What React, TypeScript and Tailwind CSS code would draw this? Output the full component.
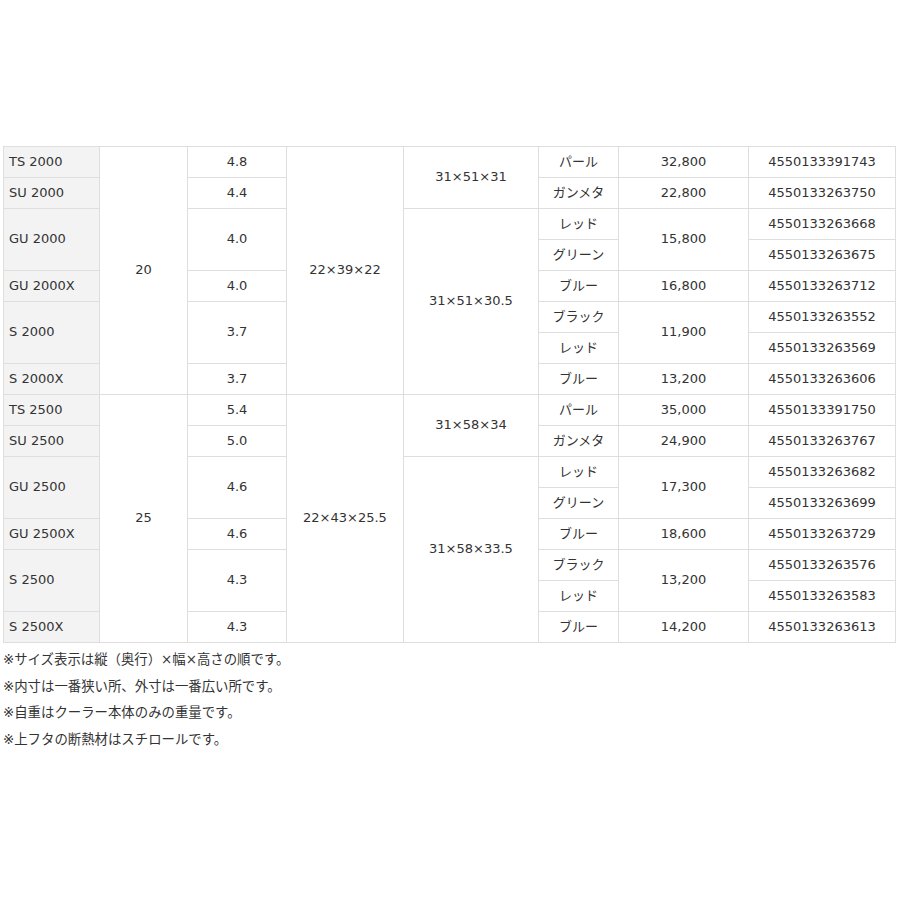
import React from 'react';

type Cell = { text: string; rows?: number; head?: boolean };

const series = (
  size: string,
  cap: string,
  inner: string,
  outerTop: string,
  outerBottom: string,
  w: string[],
  prices: string[],
  jan: string[],
): Cell[][] => [
  [
    { text: `TS ${size}`, head: true },
    { text: cap, rows: 8 },
    { text: w[0] },
    { text: inner, rows: 8 },
    { text: outerTop, rows: 2 },
    { text: 'パール' },
    { text: prices[0] },
    { text: jan[0] },
  ],
  [{ text: `SU ${size}`, head: true }, { text: w[1] }, { text: 'ガンメタ' }, { text: prices[1] }, { text: jan[1] }],
  [
    { text: `GU ${size}`, head: true, rows: 2 },
    { text: w[2], rows: 2 },
    { text: outerBottom, rows: 6 },
    { text: 'レッド' },
    { text: prices[2], rows: 2 },
    { text: jan[2] },
  ],
  [{ text: 'グリーン' }, { text: jan[3] }],
  [{ text: `GU ${size}X`, head: true }, { text: w[3] }, { text: 'ブルー' }, { text: prices[3] }, { text: jan[4] }],
  [
    { text: `S ${size}`, head: true, rows: 2 },
    { text: w[4], rows: 2 },
    { text: 'ブラック' },
    { text: prices[4], rows: 2 },
    { text: jan[5] },
  ],
  [{ text: 'レッド' }, { text: jan[6] }],
  [{ text: `S ${size}X`, head: true }, { text: w[5] }, { text: 'ブルー' }, { text: prices[5] }, { text: jan[7] }],
];

const rows: Cell[][] = [
  ...series(
    '2000',
    '20',
    '22×39×22',
    '31×51×31',
    '31×51×30.5',
    ['4.8', '4.4', '4.0', '4.0', '3.7', '3.7'],
    ['32,800', '22,800', '15,800', '16,800', '11,900', '13,200'],
    [
      '4550133391743',
      '4550133263750',
      '4550133263668',
      '4550133263675',
      '4550133263712',
      '4550133263552',
      '4550133263569',
      '4550133263606',
    ],
  ),
  ...series(
    '2500',
    '25',
    '22×43×25.5',
    '31×58×34',
    '31×58×33.5',
    ['5.4', '5.0', '4.6', '4.6', '4.3', '4.3'],
    ['35,000', '24,900', '17,300', '18,600', '13,200', '14,200'],
    [
      '4550133391750',
      '4550133263767',
      '4550133263682',
      '4550133263699',
      '4550133263729',
      '4550133263576',
      '4550133263583',
      '4550133263613',
    ],
  ),
];

const notes = [
  '※サイズ表示は縦（奥行）×幅×高さの順です。',
  '※内寸は一番狭い所、外寸は一番広い所です。',
  '※自重はクーラー本体のみの重量です。',
  '※上フタの断熱材はスチロールです。',
];

const widths = [96, 88, 99, 117, 135, 80, 130, 147];

export default function App() {
  return (
    <div
      className="w-[900px] h-[900px] bg-white pt-[146px] pl-[3px] text-[13px] text-[#333]"
      style={{ fontFamily: '"DejaVu Sans", "Noto Sans CJK JP", sans-serif' }}
    >
      <table className="w-[892px] table-fixed border-collapse">
        <colgroup>
          {widths.map((w, i) => (
            <col key={i} style={{ width: w }} />
          ))}
        </colgroup>
        <tbody>
          {rows.map((row, r) => (
            <tr key={r} className="h-[31px]">
              {row.map((c, i) =>
                c.head ? (
                  <td
                    key={i}
                    rowSpan={c.rows}
                    className="border border-[#dedede] bg-[#f3f3f3] pl-[5px] pb-[2px] align-middle text-left leading-none"
                  >
                    {c.text}
                  </td>
                ) : (
                  <td
                    key={i}
                    rowSpan={c.rows}
                    className="border border-[#dedede] pb-[2px] align-middle text-center leading-none"
                  >
                    {c.text}
                  </td>
                ),
              )}
            </tr>
          ))}
        </tbody>
      </table>
      <div className="mt-[4px] text-[13.4px]">
        {notes.map((n) => (
          <div key={n} className="leading-[26.6px]">
            {n}
          </div>
        ))}
      </div>
    </div>
  );
}
